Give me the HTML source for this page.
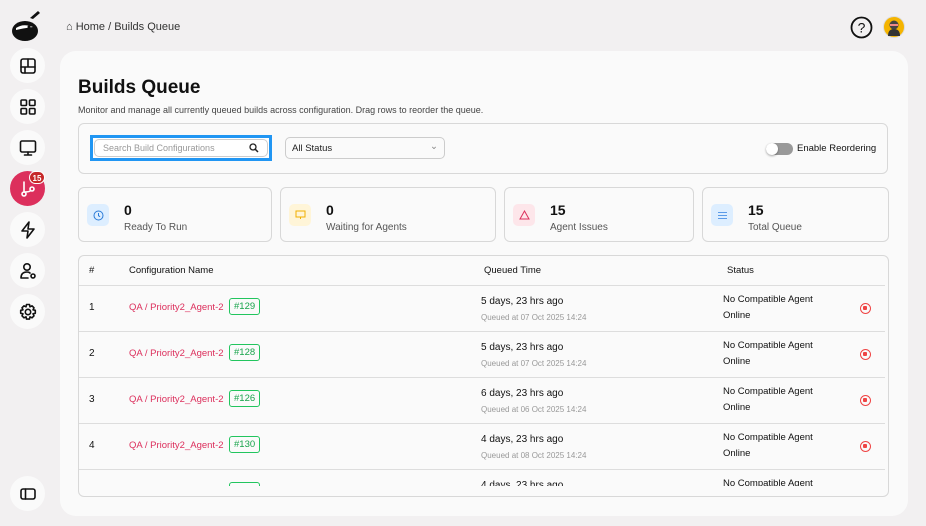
<!DOCTYPE html>
<html><head><meta charset="utf-8"><style>
*{box-sizing:border-box;margin:0;padding:0}
body{width:926px;height:526px;background:#f2f0f1;font-family:"Liberation Sans",sans-serif;color:#111;position:relative;overflow:hidden;font-size:10px}
.nav{position:absolute;left:10px;width:35px;height:35px;border-radius:50%;background:#fafafa;display:flex;align-items:center;justify-content:center}
.nav svg{width:20px;height:20px;fill:none;stroke:#111;stroke-width:1.6;stroke-linecap:round;stroke-linejoin:round}
.main{position:absolute;left:60px;top:51px;width:848px;height:465px;background:#fafafa;border-radius:16px}
.abs{position:absolute}
.card{position:absolute;top:187px;height:55px;background:#fafafa;border:1px solid #d8d8d8;border-radius:6px}
.card .ic{position:absolute;left:8px;top:16px;width:22px;height:22px;border-radius:5px;display:flex;align-items:center;justify-content:center}
.card .n{position:absolute;left:45px;top:14px;font-size:14px;font-weight:bold}
.card .l{position:absolute;left:45px;top:34px;font-size:10px;color:#555}
.row{position:absolute;left:79px;width:806px;height:46px;border-top:1px solid #ddd}
.row div{position:absolute}
.nm{font-size:9.5px}
.tag{border:1px solid #22c55e;color:#16a34a;border-radius:3px;font-size:9.5px;padding:2px 4px;top:12px}
.stop{width:11px;height:11px;border:1.5px solid #ef4444;border-radius:50%;left:781px;top:17px}
.stop:after{content:"";position:absolute;left:2px;top:2px;width:4px;height:4px;background:#ef4444;border-radius:1px}
</style></head><body>
<svg class="abs" style="left:11px;top:8px" width="32" height="34" viewBox="0 0 32 34"><path d="M19 10 L27 3 L29 5 L22 11Z" fill="#111"/><ellipse cx="14" cy="23" rx="13" ry="10" fill="#111"/><path d="M5 20 Q12 15 22 19 Q14 20 5 22Z" fill="#fff"/><circle cx="18" cy="19" r="1.5" fill="#111"/></svg>
<div class="nav" style="top:48px"><svg viewBox="0 0 20 20"><rect x="3" y="3" width="14" height="14" rx="2"/><path d="M3 11h14M10 3v8M7 11v6"/></svg></div>
<div class="nav" style="top:89px"><svg viewBox="0 0 20 20"><rect x="3" y="3" width="5.5" height="5.5" rx="1"/><rect x="11.5" y="3" width="5.5" height="5.5" rx="1"/><rect x="3" y="11.5" width="5.5" height="5.5" rx="1"/><rect x="11.5" y="11.5" width="5.5" height="5.5" rx="1"/></svg></div>
<div class="nav" style="top:130px"><svg viewBox="0 0 20 20"><rect x="2.5" y="3" width="15" height="11" rx="1.5"/><path d="M10 14v3M6.5 17h7"/></svg></div>
<div class="nav" style="top:171px;background:#dc2f5c"><svg viewBox="0 0 20 20" style="stroke:#fff"><circle cx="6" cy="15" r="2"/><circle cx="14" cy="10" r="2"/><path d="M6 3v10M6 13 Q12 13 12.5 11.5"/></svg></div>
<div class="abs" style="left:29px;top:171px;width:16px;height:13px;border-radius:7px;background:#c62828;color:#fff;font-size:8px;font-weight:bold;text-align:center;line-height:13px;border:1px solid #fff">15</div>
<div class="nav" style="top:212px"><svg viewBox="0 0 20 20"><path d="M11 2 L4 11 H10 L9 18 L16 9 H10Z"/></svg></div>
<div class="nav" style="top:253px"><svg viewBox="0 0 20 20"><circle cx="9" cy="6" r="3.2"/><path d="M3 17 Q3 11 9 11 Q11 11 12 12M3 17h7"/><circle cx="15" cy="15" r="2"/></svg></div>
<div class="nav" style="top:294px"><svg viewBox="0 0 20 20"><circle cx="10" cy="10" r="2.7"/><path d="M8.5 2.5h3l.5 2.3 2-1 2 2-1 2 2.3.5v3l-2.3.5 1 2-2 2-2-1-.5 2.3h-3l-.5-2.3-2 1-2-2 1-2-2.3-.5v-3l2.3-.5-1-2 2-2 2 1z"/></svg></div>
<div class="nav" style="top:476px"><svg viewBox="0 0 20 20"><rect x="3" y="5" width="14" height="10" rx="2"/><path d="M7.5 5v10"/></svg></div>

<div class="abs" style="left:66px;top:21px;font-size:11px;color:#333">⌂ Home / Builds Queue</div>
<svg class="abs" style="left:850px;top:16px" width="23" height="23" viewBox="0 0 23 23"><circle cx="11.5" cy="11.5" r="10" fill="none" stroke="#111" stroke-width="1.8"/><text x="11.5" y="16.5" text-anchor="middle" font-size="14" font-family="Liberation Sans" fill="#111">?</text></svg>
<svg class="abs" style="left:883px;top:16px" width="22" height="22" viewBox="0 0 22 22"><circle cx="11" cy="11" r="10.5" fill="#f5b400" stroke="#ddd"/><path d="M5 20 Q5 13 11 13 Q17 13 17 20Z" fill="#333"/><circle cx="11" cy="9" r="4.5" fill="#444"/><rect x="7" y="8" width="8" height="2" fill="#e88"/></svg>

<div class="main"></div>
<div class="abs" style="left:78px;top:77px;font-size:19px;font-weight:bold">Builds Queue</div>
<div class="abs" style="left:78px;top:105px;font-size:9px;color:#444">Monitor and manage all currently queued builds across configuration. Drag rows to reorder the queue.</div>
<div class="abs" style="left:78px;top:123px;width:810px;height:51px;border:1px solid #d8d8d8;border-radius:6px"></div>
<div class="abs" style="left:90px;top:135px;width:182px;height:26px;border:3px solid #2196f3;background:#fff"><div style="position:relative;margin:1px;height:18px;border:1px solid #ccc;border-radius:5px;font-size:9px;color:#999;padding:3px 8px">Search Build Configurations<svg style="position:absolute;right:8px;top:3px" width="10" height="10" viewBox="0 0 10 10"><circle cx="4" cy="4" r="3" fill="none" stroke="#222" stroke-width="1.3"/><path d="M6.3 6.3L9 9" stroke="#222" stroke-width="1.5"/></svg></div></div>
<div class="abs" style="left:285px;top:137px;width:160px;height:22px;border:1px solid #ccc;border-radius:5px;font-size:9.5px;padding:5px 6px;color:#222">All Status<span style="position:absolute;right:6px;top:3px;color:#888">⌄</span></div>
<div class="abs" style="left:766px;top:143px;width:27px;height:12px;border-radius:6px;background:#999"><div style="position:absolute;left:0;top:0;width:12px;height:12px;border-radius:50%;background:#fff;box-shadow:0 1px 2px #0005"></div></div>
<div class="abs" style="left:797px;top:143px;font-size:9.5px">Enable Reordering</div>

<div class="card" style="left:78px;width:194px"><div class="ic" style="background:#ddeeff"><svg width="11" height="11" viewBox="0 0 11 11"><circle cx="5.5" cy="5.5" r="4.5" fill="none" stroke="#2a7bd8"/><path d="M5.5 3v2.7l1.6 1" stroke="#2a7bd8" fill="none"/></svg></div><div class="n">0</div><div class="l">Ready To Run</div></div>
<div class="card" style="left:280px;width:216px"><div class="ic" style="background:#fff5d8"><svg width="11" height="10" viewBox="0 0 11 10"><rect x="1" y="1" width="9" height="6" fill="none" stroke="#f0b000"/><path d="M5.5 7v2" stroke="#f0b000"/></svg></div><div class="n">0</div><div class="l">Waiting for Agents</div></div>
<div class="card" style="left:504px;width:190px"><div class="ic" style="background:#fde6ea"><svg width="11" height="10" viewBox="0 0 11 10"><path d="M5.5 1 L10 9 H1Z" fill="none" stroke="#dc2f5c"/></svg></div><div class="n">15</div><div class="l">Agent Issues</div></div>
<div class="card" style="left:702px;width:187px"><div class="ic" style="background:#ddeeff"><svg width="11" height="9" viewBox="0 0 11 9"><path d="M1 1.5h9M1 4.5h9M1 7.5h9" stroke="#5b9be8"/></svg></div><div class="n">15</div><div class="l">Total Queue</div></div>

<div class="abs" style="left:78px;top:255px;width:811px;height:242px;border:1px solid #d8d8d8;border-radius:6px;overflow:hidden">
<div class="abs" style="left:10px;top:9px;font-size:9.5px">#</div>
<div class="abs" style="left:50px;top:9px;font-size:9.5px">Configuration Name</div>
<div class="abs" style="left:405px;top:9px;font-size:9.5px">Queued Time</div>
<div class="abs" style="left:648px;top:9px;font-size:9.5px">Status</div>
</div>
<div class="abs" style="left:79px;top:256px;width:809px;height:230px;overflow:hidden">
<div class="row" style="left:0;top:29px"><div style="left:10px;top:16px">1</div><div class="nm" style="left:50px;top:16px;color:#dc2f5c">QA / Priority2_Agent-2</div><div class="tag" style="left:150px">#129</div><div style="left:402px;top:10px">5 days, 23 hrs ago</div><div style="left:402px;top:27px;font-size:8px;color:#999">Queued at 07 Oct 2025 14:24</div><div style="left:644px;top:8px;font-size:9.5px">No Compatible Agent</div><div style="left:644px;top:24px;font-size:9.5px">Online</div><div class="stop"></div></div>
<div class="row" style="left:0;top:75px"><div style="left:10px;top:16px">2</div><div class="nm" style="left:50px;top:16px;color:#dc2f5c">QA / Priority2_Agent-2</div><div class="tag" style="left:150px">#128</div><div style="left:402px;top:10px">5 days, 23 hrs ago</div><div style="left:402px;top:27px;font-size:8px;color:#999">Queued at 07 Oct 2025 14:24</div><div style="left:644px;top:8px;font-size:9.5px">No Compatible Agent</div><div style="left:644px;top:24px;font-size:9.5px">Online</div><div class="stop"></div></div>
<div class="row" style="left:0;top:121px"><div style="left:10px;top:16px">3</div><div class="nm" style="left:50px;top:16px;color:#dc2f5c">QA / Priority2_Agent-2</div><div class="tag" style="left:150px">#126</div><div style="left:402px;top:10px">6 days, 23 hrs ago</div><div style="left:402px;top:27px;font-size:8px;color:#999">Queued at 06 Oct 2025 14:24</div><div style="left:644px;top:8px;font-size:9.5px">No Compatible Agent</div><div style="left:644px;top:24px;font-size:9.5px">Online</div><div class="stop"></div></div>
<div class="row" style="left:0;top:167px"><div style="left:10px;top:16px">4</div><div class="nm" style="left:50px;top:16px;color:#dc2f5c">QA / Priority2_Agent-2</div><div class="tag" style="left:150px">#130</div><div style="left:402px;top:10px">4 days, 23 hrs ago</div><div style="left:402px;top:27px;font-size:8px;color:#999">Queued at 08 Oct 2025 14:24</div><div style="left:644px;top:8px;font-size:9.5px">No Compatible Agent</div><div style="left:644px;top:24px;font-size:9.5px">Online</div><div class="stop"></div></div>
<div class="row" style="left:0;top:213px;height:18px;overflow:hidden"><div class="tag" style="left:150px">#131</div><div style="left:402px;top:10px">4 days, 23 hrs ago</div><div style="left:644px;top:8px;font-size:9.5px">No Compatible Agent</div></div>
</div>
</body></html>
